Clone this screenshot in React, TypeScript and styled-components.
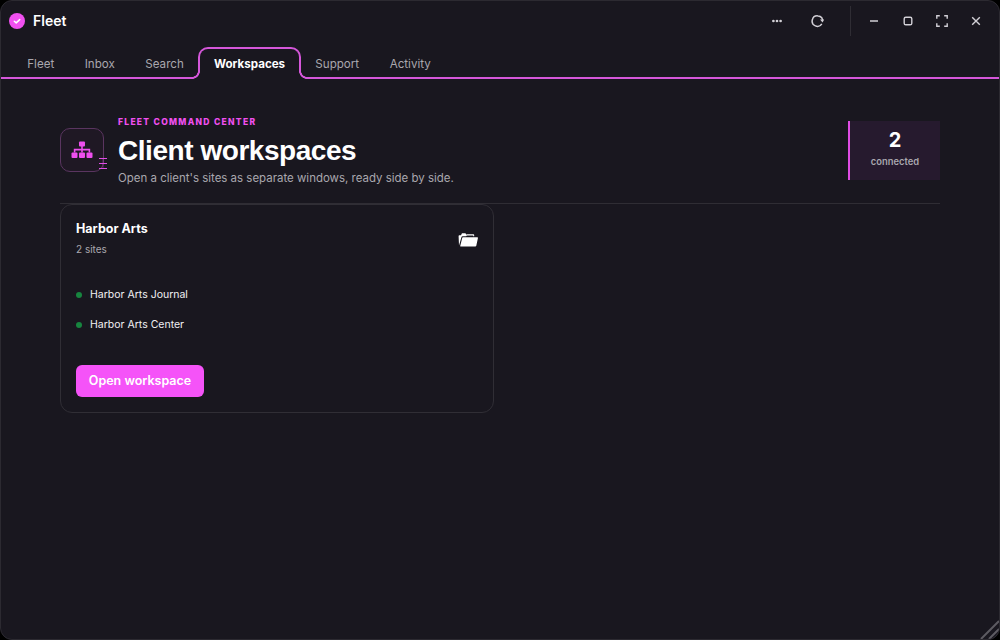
import React from "react";
import styled, { createGlobalStyle } from "styled-components";

const Global = createGlobalStyle`
  html, body { margin: 0; padding: 0; background: #000; }
  body { font-family: Inter, "Liberation Sans", sans-serif; -webkit-font-smoothing: antialiased; }
  #root { width: 1000px; height: 640px; }
`;

const Win = styled.div`
  position: relative;
  width: 1000px;
  height: 640px;
  box-sizing: border-box;
  background: #19171f;
  border: 1px solid #2c2a31;
  border-radius: 12px;
  overflow: hidden;
  display: flex;
  flex-direction: column;
  color: #fff;
`;

const TitleBar = styled.header`
  height: 39px;
  flex: none;
  display: flex;
  align-items: center;
  padding: 0 6px 0 8px;
`;

const Logo = styled.span`
  width: 16px;
  height: 16px;
  border-radius: 50%;
  background: #f050f0;
  display: flex;
  align-items: center;
  justify-content: center;
  margin-right: 8px;
`;

const AppName = styled.span`
  font-size: 14px;
  font-weight: 600;
  color: #fff;
  flex: 1;
`;

const Ctl = styled.button<{ $w: number }>`
  width: ${(p) => p.$w}px;
  height: 30px;
  padding: 0;
  border: 0;
  background: transparent;
  color: #d2d0d6;
  display: flex;
  align-items: center;
  justify-content: center;
`;

const Sep = styled.span`
  width: 1px;
  height: 30px;
  background: #2f2d34;
  margin: 0 6px 0 9px;
`;

const TabBar = styled.nav`
  height: 39px;
  flex: none;
  display: flex;
  align-items: flex-end;
  box-sizing: border-box;
  padding-left: 11px;
  border-bottom: 2px solid #d557da;
`;

const Tab = styled.span<{ $on?: boolean }>`
  position: relative;
  box-sizing: border-box;
  display: flex;
  align-items: center;
  ${(p) =>
    p.$on
      ? `
    height: 32px;
    margin: 0 -1px -2px -1px;
    padding: 0 14px;
    font-size: 11.6px;
    font-weight: 700;
    color: #fff;
    background: #19171f;
    border: 2px solid #d557da;
    border-bottom: 0;
    border-radius: 10px 10px 0 0;
    z-index: 1;
    &::before, &::after {
      content: "";
      position: absolute;
      bottom: 0;
      width: 8px;
      height: 8px;
    }
    &::before {
      left: -8px;
      background: radial-gradient(circle at 0 0, transparent 5.6px, #d557da 6.1px, #d557da 7.6px, #19171f 8.1px);
    }
    &::after {
      right: -8px;
      background: radial-gradient(circle at 100% 0, transparent 5.6px, #d557da 6.1px, #d557da 7.6px, #19171f 8.1px);
    }
  `
      : `
    height: 28px;
    padding: 2px 15.25px 0;
    font-size: 11.6px;
    font-weight: 400;
    color: #a9a7ae;
  `}
`;

const Main = styled.main`
  flex: 1;
  padding: 42px 59px 0;
  display: flex;
  flex-direction: column;
`;

const Head = styled.section`
  display: flex;
  align-items: flex-start;
  height: 83px;
  box-sizing: border-box;
  border-bottom: 1px solid #2f2d34;
`;

const IconBox = styled.div`
  position: relative;
  box-sizing: border-box;
  width: 44px;
  height: 44px;
  margin-top: 7px;
  margin-right: 14px;
  border-radius: 10px;
  border: 1px solid #5a3560;
  background: #1f1824;
  display: flex;
  align-items: center;
  justify-content: center;
`;

const Ticks = styled.svg`
  position: absolute;
  left: 37px;
  top: 28px;
`;

const HeadText = styled.div`
  flex: 1;
`;

const Eyebrow = styled.div`
  font-size: 8.5px;
  line-height: 10px;
  font-weight: 800;
  letter-spacing: 1.3px;
  color: #f050f0;
  margin-top: -4px;
`;

const Title = styled.h1`
  margin: 6px 0 0;
  font-family: "Liberation Sans", Inter, sans-serif;
  font-size: 28px;
  line-height: 36px;
  font-weight: 700;
  letter-spacing: -0.45px;
  color: #fff;
`;

const Sub = styled.p`
  margin: 1px 0 0;
  font-size: 11.47px;
  line-height: 16px;
  color: #a9a7ae;
`;

const Stat = styled.div`
  width: 92px;
  height: 59px;
  box-sizing: border-box;
  border-left: 2px solid #e04ce4;
  background: #261a2e;
  display: flex;
  flex-direction: column;
  align-items: center;
`;

const StatNum = styled.div`
  font-size: 20px;
  line-height: 24px;
  font-weight: 700;
  margin-top: 7px;
  color: #fff;
`;

const StatLabel = styled.div`
  font-size: 9.4px;
  line-height: 12px;
  font-weight: 600;
  margin-top: 4px;
  color: #a9a7ae;
`;

const Card = styled.article`
  width: 434px;
  height: 209px;
  box-sizing: border-box;
  border: 1px solid #302e35;
  border-radius: 12px;
  padding: 15px;
  display: flex;
  flex-direction: column;
`;

const CardTop = styled.div`
  display: flex;
  justify-content: space-between;
  align-items: flex-start;
`;

const CardName = styled.h2`
  margin: 0;
  font-size: 12.5px;
  line-height: 18px;
  font-weight: 700;
  color: #fff;
`;

const CardSub = styled.div`
  font-size: 10px;
  line-height: 14px;
  margin-top: 4px;
  color: #a9a7ae;
`;

const Folder = styled.svg`
  margin-top: 13px;
`;

const Sites = styled.ul`
  list-style: none;
  margin: 32px 0 0;
  padding: 0;
  display: flex;
  flex-direction: column;
  gap: 16px;
`;

const Site = styled.li`
  display: flex;
  align-items: center;
  gap: 8px;
  font-size: 10.5px;
  line-height: 14px;
  color: #f1f0f3;
`;

const Dot = styled.span`
  width: 6px;
  height: 6px;
  border-radius: 50%;
  background: #17853f;
`;

const Primary = styled.button`
  margin-top: auto;
  width: 128px;
  height: 32px;
  border: 0;
  border-radius: 6px;
  background: #f553f8;
  color: #fff;
  font-family: inherit;
  font-size: 12.5px;
  font-weight: 600;
  padding: 0 0 2px;
`;

const Grip = styled.svg`
  position: absolute;
  right: 0;
  bottom: 0;
`;

const icon = { fill: "none", stroke: "currentColor", strokeWidth: 1.4 };

export default function App() {
  return (
    <Win>
      <Global />
      <TitleBar>
        <Logo>
          <svg width="10" height="10" viewBox="0 0 10 10" fill="none" stroke="#fff" strokeWidth="1.5" strokeLinecap="round" strokeLinejoin="round">
            <path d="M2.3 5.2 4.2 6.9 7.7 3.6" />
          </svg>
        </Logo>
        <AppName>Fleet</AppName>
        <Ctl $w={36}>
          <svg width="12" height="12" viewBox="0 0 12 12" fill="currentColor">
            <circle cx="2.400" cy="6" r="1.350" />
            <circle cx="6" cy="6" r="1.350" />
            <circle cx="9.600" cy="6" r="1.350" />
          </svg>
        </Ctl>
        <Ctl $w={46}>
          <svg width="14" height="14" viewBox="0 0 14 14" fill="none" stroke="currentColor" strokeWidth="1.5">
            <path d="M10.800 9.800A5.200 5.200 0 1 1 7 1.900C8.600 1.900 9.900 2.600 10.800 3.800L11.600 6" />
            <path d="M9 5.500h4.200L11.500 8.500Z" fill="currentColor" stroke="none" />
          </svg>
        </Ctl>
        <Sep />
        <Ctl $w={34}>
          <svg width="12" height="12" viewBox="0 0 12 12" {...icon}>
            <path d="M2 6h8" />
          </svg>
        </Ctl>
        <Ctl $w={34}>
          <svg width="12" height="12" viewBox="0 0 12 12" {...icon}>
            <rect x="2.200" y="2.200" width="7.600" height="7.600" rx="1.600" />
          </svg>
        </Ctl>
        <Ctl $w={34}>
          <svg width="12" height="12" viewBox="0 0 12 12" {...icon}>
            <path d="M.8 3.800V.8h3M8.200.8h3v3M11.200 8.200v3h-3M3.800 11.200h-3v-3" />
          </svg>
        </Ctl>
        <Ctl $w={34}>
          <svg width="12" height="12" viewBox="0 0 12 12" {...icon}>
            <path d="M2.200 2.200l7.600 7.600M9.800 2.200l-7.600 7.600" />
          </svg>
        </Ctl>
      </TitleBar>
      <TabBar>
        <Tab>Fleet</Tab>
        <Tab>Inbox</Tab>
        <Tab>Search</Tab>
        <Tab $on>Workspaces</Tab>
        <Tab>Support</Tab>
        <Tab>Activity</Tab>
      </TabBar>
      <Main>
        <Head>
          <IconBox>
            <svg width="22" height="18" viewBox="0 0 22 18" fill="#ee4fee">
              <rect x="8" y="0.500" width="6" height="5" rx="1" />
              <rect x="0.500" y="11.500" width="6" height="5.500" rx="1" />
              <rect x="8" y="11.500" width="6" height="5.500" rx="1" />
              <rect x="15.500" y="11.500" width="6" height="5.500" rx="1" />
              <path d="M10.200 5h1.600v2.800h7.400v3.700h-1.600V9.400h-5.800v2.100h-1.600V9.400H4.400v2.100H2.800V7.800h7.400z" />
            </svg>
            <Ticks width="10" height="14" viewBox="0 0 10 14" stroke="#e04ce4" strokeWidth="1" fill="none">
              <path d="M1 1.500h8M1 6.500h8M1 11.500h8" />
              <path d="M5 1.500v10" opacity="0.35" />
            </Ticks>
          </IconBox>
          <HeadText>
            <Eyebrow>FLEET COMMAND CENTER</Eyebrow>
            <Title>Client workspaces</Title>
            <Sub>Open a client's sites as separate windows, ready side by side.</Sub>
          </HeadText>
          <Stat>
            <StatNum>2</StatNum>
            <StatLabel>connected</StatLabel>
          </Stat>
        </Head>
        <Card>
          <CardTop>
            <div>
              <CardName>Harbor Arts</CardName>
              <CardSub>2 sites</CardSub>
            </div>
            <Folder width="20" height="14" viewBox="0 0 20 14" fill="#fff">
              <path d="M1 12.500 .6 3.200C.6 2.500 1 2.200 1.600 2.200H3L3.800.6C4 .3 4.200 .2 4.500 .2H7.200C7.500 .2 7.800 .4 7.900 .7L8.300 1.500H8.800L9 1.200H15.200C15.800 1.200 16.200 1.600 16.200 2.200V3.200H15.200V2.500H8.800L8.200 3.200H4.500C4 3.200 3.700 3.500 3.500 4Z" />
              <path d="M5 4.300H19.200C19.700 4.300 20 4.700 19.900 5.200L18.300 12.800C18.200 13.300 17.800 13.600 17.300 13.600H2.500C2.300 13.600 2.100 13.400 2.200 13.100L4.200 4.900C4.300 4.500 4.600 4.300 5 4.300Z" />
            </Folder>
          </CardTop>
          <Sites>
            <Site><Dot />Harbor Arts Journal</Site>
            <Site><Dot />Harbor Arts Center</Site>
          </Sites>
          <Primary>Open workspace</Primary>
        </Card>
      </Main>
      <Grip width="20" height="20" viewBox="0 0 20 20" stroke="#5d5b62" strokeWidth="2" fill="none">
        <path d="M2 20 20 2M10 20 20 10" />
      </Grip>
    </Win>
  );
}
